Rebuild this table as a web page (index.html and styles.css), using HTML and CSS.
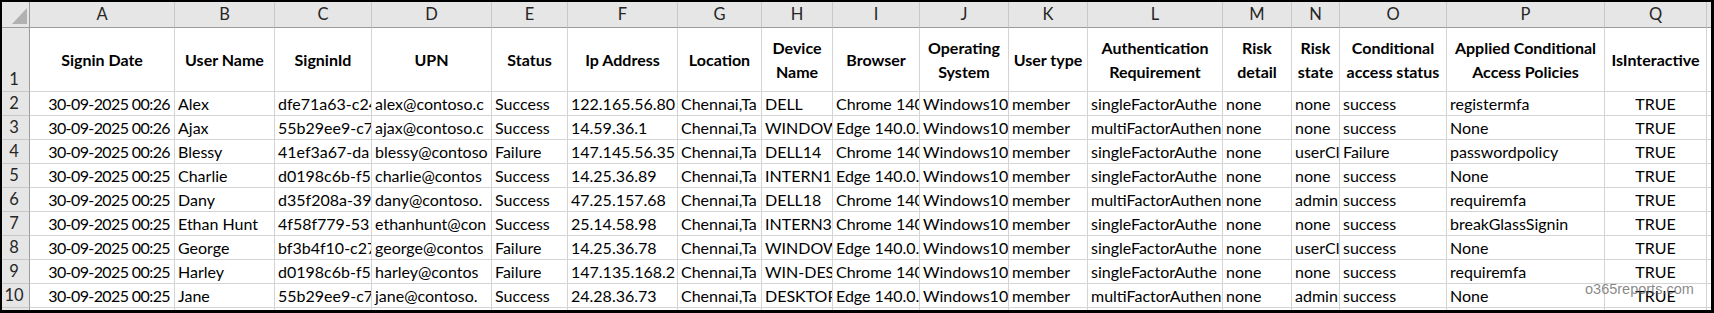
FILE: index.html
```html
<!DOCTYPE html>
<html>
<head>
<meta charset="utf-8">
<link rel="stylesheet" href="styles.css">
</head>
<body>
<div class="sheet">
  <div class="grid">
    <!-- column letters -->
    <div class="corner"><span class="tri"></span></div>
    <div class="ch">A</div><div class="ch">B</div><div class="ch">C</div><div class="ch">D</div><div class="ch">E</div><div class="ch">F</div><div class="ch">G</div><div class="ch">H</div><div class="ch">I</div><div class="ch">J</div><div class="ch">K</div><div class="ch">L</div><div class="ch">M</div><div class="ch">N</div><div class="ch">O</div><div class="ch">P</div><div class="ch">Q</div><div class="ch fill"></div>

    <!-- row 1 headers -->
    <div class="rh rh-bottom">1</div>
    <div class="hd">Signin Date</div>
    <div class="hd">User Name</div>
    <div class="hd">SigninId</div>
    <div class="hd">UPN</div>
    <div class="hd">Status</div>
    <div class="hd">Ip Address</div>
    <div class="hd">Location</div>
    <div class="hd">Device<br>Name</div>
    <div class="hd">Browser</div>
    <div class="hd">Operating<br>System</div>
    <div class="hd">User type</div>
    <div class="hd">Authentication<br>Requirement</div>
    <div class="hd">Risk<br>detail</div>
    <div class="hd">Risk<br>state</div>
    <div class="hd">Conditional<br>access status</div>
    <div class="hd">Applied Conditional<br>Access Policies</div>
    <div class="hd">IsInteractive</div>
    <div class="c fill"></div>

    <!-- row 2 -->
    <div class="rh">2</div>
    <div class="c r">30-09-2025 00:26</div><div class="c">Alex</div><div class="c">dfe71a63-c24</div><div class="c">alex@contoso.c</div><div class="c">Success</div><div class="c">122.165.56.80</div><div class="c">Chennai,Ta</div><div class="c">DELL</div><div class="c">Chrome 140</div><div class="c">Windows10</div><div class="c">member</div><div class="c">singleFactorAuthe</div><div class="c">none</div><div class="c">none</div><div class="c">success</div><div class="c">registermfa</div><div class="c m">TRUE</div><div class="c fill"></div>

    <!-- row 3 -->
    <div class="rh">3</div>
    <div class="c r">30-09-2025 00:26</div><div class="c">Ajax</div><div class="c">55b29ee9-c7</div><div class="c">ajax@contoso.c</div><div class="c">Success</div><div class="c">14.59.36.1</div><div class="c">Chennai,Ta</div><div class="c">WINDOW</div><div class="c">Edge 140.0.</div><div class="c">Windows10</div><div class="c">member</div><div class="c">multiFactorAuthen</div><div class="c">none</div><div class="c">none</div><div class="c">success</div><div class="c">None</div><div class="c m">TRUE</div><div class="c fill"></div>

    <!-- row 4 -->
    <div class="rh">4</div>
    <div class="c r">30-09-2025 00:26</div><div class="c">Blessy</div><div class="c">41ef3a67-da</div><div class="c">blessy@contoso</div><div class="c">Failure</div><div class="c">147.145.56.35</div><div class="c">Chennai,Ta</div><div class="c">DELL14</div><div class="c">Chrome 140</div><div class="c">Windows10</div><div class="c">member</div><div class="c">singleFactorAuthe</div><div class="c">none</div><div class="c">userCl</div><div class="c">Failure</div><div class="c">passwordpolicy</div><div class="c m">TRUE</div><div class="c fill"></div>

    <!-- row 5 -->
    <div class="rh">5</div>
    <div class="c r">30-09-2025 00:25</div><div class="c">Charlie</div><div class="c">d0198c6b-f5</div><div class="c">charlie@contos</div><div class="c">Success</div><div class="c">14.25.36.89</div><div class="c">Chennai,Ta</div><div class="c">INTERN1</div><div class="c">Edge 140.0.</div><div class="c">Windows10</div><div class="c">member</div><div class="c">singleFactorAuthe</div><div class="c">none</div><div class="c">none</div><div class="c">success</div><div class="c">None</div><div class="c m">TRUE</div><div class="c fill"></div>

    <!-- row 6 -->
    <div class="rh">6</div>
    <div class="c r">30-09-2025 00:25</div><div class="c">Dany</div><div class="c">d35f208a-39</div><div class="c">dany@contoso.</div><div class="c">Success</div><div class="c">47.25.157.68</div><div class="c">Chennai,Ta</div><div class="c">DELL18</div><div class="c">Chrome 140</div><div class="c">Windows10</div><div class="c">member</div><div class="c">multiFactorAuthen</div><div class="c">none</div><div class="c">admin</div><div class="c">success</div><div class="c">requiremfa</div><div class="c m">TRUE</div><div class="c fill"></div>

    <!-- row 7 -->
    <div class="rh">7</div>
    <div class="c r">30-09-2025 00:25</div><div class="c">Ethan Hunt</div><div class="c">4f58f779-53</div><div class="c">ethanhunt@con</div><div class="c">Success</div><div class="c">25.14.58.98</div><div class="c">Chennai,Ta</div><div class="c">INTERN3</div><div class="c">Chrome 140</div><div class="c">Windows10</div><div class="c">member</div><div class="c">singleFactorAuthe</div><div class="c">none</div><div class="c">none</div><div class="c">success</div><div class="c">breakGlassSignin</div><div class="c m">TRUE</div><div class="c fill"></div>

    <!-- row 8 -->
    <div class="rh">8</div>
    <div class="c r">30-09-2025 00:25</div><div class="c">George</div><div class="c">bf3b4f10-c27</div><div class="c">george@contos</div><div class="c">Failure</div><div class="c">14.25.36.78</div><div class="c">Chennai,Ta</div><div class="c">WINDOW</div><div class="c">Edge 140.0.</div><div class="c">Windows10</div><div class="c">member</div><div class="c">singleFactorAuthe</div><div class="c">none</div><div class="c">userCl</div><div class="c">success</div><div class="c">None</div><div class="c m">TRUE</div><div class="c fill"></div>

    <!-- row 9 -->
    <div class="rh">9</div>
    <div class="c r">30-09-2025 00:25</div><div class="c">Harley</div><div class="c">d0198c6b-f5</div><div class="c">harley@contos</div><div class="c">Failure</div><div class="c">147.135.168.2</div><div class="c">Chennai,Ta</div><div class="c">WIN-DES</div><div class="c">Chrome 140</div><div class="c">Windows10</div><div class="c">member</div><div class="c">singleFactorAuthe</div><div class="c">none</div><div class="c">none</div><div class="c">success</div><div class="c">requiremfa</div><div class="c m">TRUE</div><div class="c fill"></div>

    <!-- row 10 -->
    <div class="rh">10</div>
    <div class="c r">30-09-2025 00:25</div><div class="c">Jane</div><div class="c">55b29ee9-c7</div><div class="c">jane@contoso.</div><div class="c">Success</div><div class="c">24.28.36.73</div><div class="c">Chennai,Ta</div><div class="c">DESKTOP</div><div class="c">Edge 140.0.</div><div class="c">Windows10</div><div class="c">member</div><div class="c">multiFactorAuthen</div><div class="c">none</div><div class="c">admin</div><div class="c">success</div><div class="c">None</div><div class="c m">TRUE</div><div class="c fill"></div>

    <!-- partial row 11 -->
    <div class="rh part"></div>
    <div class="c part"></div><div class="c part"></div><div class="c part"></div><div class="c part"></div><div class="c part"></div><div class="c part"></div><div class="c part"></div><div class="c part"></div><div class="c part"></div><div class="c part"></div><div class="c part"></div><div class="c part"></div><div class="c part"></div><div class="c part"></div><div class="c part"></div><div class="c part"></div><div class="c part"></div><div class="c part fill"></div>
  </div>
  <div class="watermark">o365reports.com</div>
</div>
</body>
</html>
```

FILE: styles.css
```css
html, body {
  margin: 0;
  padding: 0;
  background: #ffffff;
}

.sheet {
  position: relative;
  width: 1714px;
  height: 313px;
  box-sizing: border-box;
  border-top: 2px solid #000;
  border-left: 2px solid #000;
  border-right: 3px solid #000;
  border-bottom: 3px solid #000;
  overflow: hidden;
  font-family: Lato, "Liberation Sans", Arial, sans-serif;
  font-size: 16px;
  color: #000;
}

.grid {
  display: grid;
  grid-template-columns: 28px 145px 100px 97px 120px 76px 110px 84px 71px 87px 89px 79px 135px 69px 48px 107px 158px 102px 1fr;
  grid-template-rows: 26px 64px repeat(9, 24px) 1fr;
  height: 100%;
}

.grid > div {
  box-sizing: border-box;
  border-right: 1px solid #d4d4d4;
  border-bottom: 1px solid #d4d4d4;
  overflow: hidden;
  white-space: nowrap;
  min-width: 0;
}

.corner {
  position: relative;
  background: #e6e6e6;
  border-right: 1px solid #9c9c9c !important;
  border-bottom: 1px solid #9c9c9c !important;
}

.tri {
  position: absolute;
  right: 2px;
  bottom: 3px;
  width: 0;
  height: 0;
  border-left: 15px solid transparent;
  border-bottom: 16px solid #b1b1b1;
}

.ch {
  background: #e6e6e6;
  color: #262626;
  text-align: center;
  line-height: 25px;
  font-size: 16.5px;
  border-right: 1px solid #c8c8c8 !important;
  border-bottom: 1px solid #9c9c9c !important;
}

.rh {
  background: #e6e6e6;
  color: #262626;
  text-align: center;
  line-height: 23px;
  font-size: 16.5px;
  padding-right: 3px;
  border-right: 1px solid #9c9c9c !important;
  border-bottom: 1px solid #c8c8c8 !important;
}

.rh-bottom {
  display: flex;
  align-items: flex-end;
  justify-content: center;
}

.hd {
  display: flex;
  align-items: center;
  justify-content: center;
  text-align: center;
  font-weight: bold;
  font-size: 16px;
  line-height: 24px;
  padding-top: 1px;
}

.c {
  padding: 0 3px;
  line-height: 23px;
}

.r {
  text-align: right;
  letter-spacing: -0.6px;
  padding-right: 4px;
}

.m {
  text-align: center;
}

.fill {
  border-right: none !important;
  padding: 0 !important;
}

.part {
  border-bottom: none !important;
}

.watermark {
  position: absolute;
  left: 1583px;
  top: 279px;
  font-family: "Liberation Sans", Arial, sans-serif;
  font-size: 14.5px;
  line-height: 17px;
  color: rgba(95, 95, 95, 0.75);
  white-space: nowrap;
}
```
